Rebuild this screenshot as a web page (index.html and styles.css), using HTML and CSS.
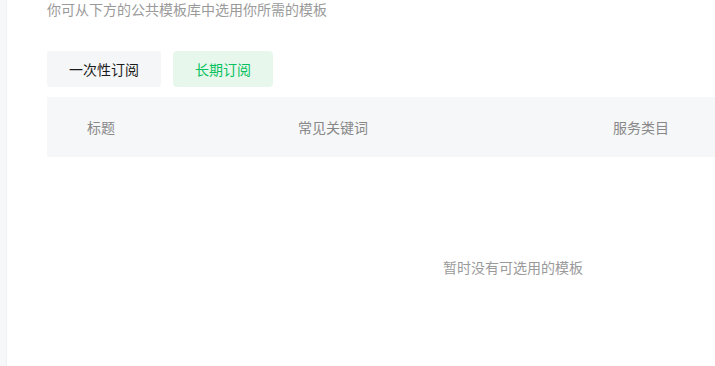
FILE: index.html
```html
<!DOCTYPE html>
<html>
<head>
    <link rel="stylesheet" href="styles.css">
</head>
<body>
    <div id="page">
        <!-- Left rail -->
        <div class="side-rail"></div>

        <!-- Main Section -->
        <div id="main">
            <p class="subtitle">你可从下方的公共模板库中选用你所需的模板</p>

            <div class="tab-group">
                <button class="tab">一次性订阅</button>
                <button class="tab active">长期订阅</button>
            </div>

            <div class="template-table">
                <div class="table-head">
                    <div class="cell">标题</div>
                    <div class="cell">常见关键词</div>
                    <div class="cell">服务类目</div>
                </div>
                <div class="table-empty">暂时没有可选用的模板</div>
            </div>
        </div>
    </div>
</body>
</html>
```

FILE: styles.css
```css
/* Global Styles */
body {
    margin: 0;
    font-family: "Noto Sans CJK SC", "Noto Sans", sans-serif;
    font-size: 14px;
    color: #353535;
    background-color: #ffffff;
    overflow: hidden;
}

#page {
    display: flex;
    height: 366px;
    overflow: hidden;
}

/* Left rail */
.side-rail {
    width: 6px;
    flex-shrink: 0;
    background-color: #f6f7f9;
    border-right: 1px solid #eef0f3;
}

/* Main */
#main {
    flex: 1;
    min-width: 0;
    padding-left: 40px;
    overflow: hidden;
}

.subtitle {
    margin: -1px 0 0;
    line-height: 20px;
    color: #9a9a9a;
}

/* Tabs */
.tab-group {
    display: flex;
    gap: 12px;
    margin-top: 32px;
}

.tab {
    height: 36px;
    padding: 0 22px;
    border: none;
    border-radius: 4px;
    background-color: #f5f6f8;
    color: #1a1a1a;
    font-family: inherit;
    font-size: 14px;
    cursor: pointer;
}

.tab.active {
    background-color: #e8f7ec;
    color: #07c160;
}

/* Table */
.template-table {
    width: 932px;
    margin-top: 10px;
}

.table-head {
    display: grid;
    grid-template-columns: 211px 315px 1fr;
    height: 60px;
    align-items: center;
    background-color: #f6f7f9;
}

.cell {
    padding-left: 40px;
    color: #888888;
    line-height: 20px;
}

.table-empty {
    padding-top: 100px;
    line-height: 20px;
    text-align: center;
    color: #9a9a9a;
}
```
